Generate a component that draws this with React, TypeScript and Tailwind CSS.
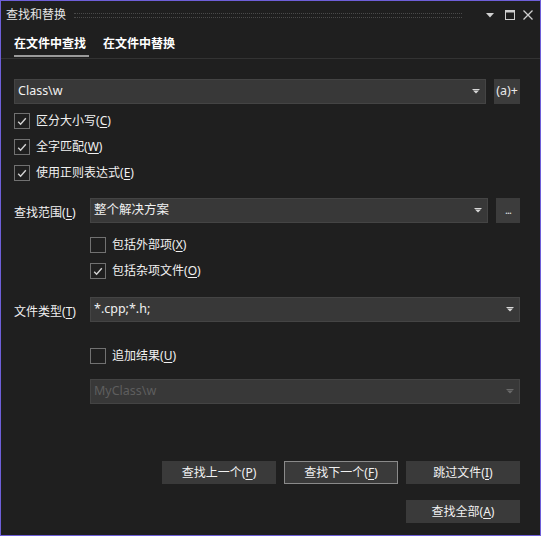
import React from 'react';

const FONT = { fontFamily: '"Segoe UI", "Noto Sans", "Noto Sans CJK SC", sans-serif' };

// mnemonic label: "区分大小写" + underlined key in parentheses
const Label: React.FC<{ text: string; k: string }> = ({ text, k }) => (
  <span className="text-[12px] text-[#f1f1f1] leading-none whitespace-nowrap">
    {text}(<u className="underline-offset-2">{k}</u>)
  </span>
);

const Arrow: React.FC<{ dim?: boolean }> = ({ dim }) => (
  <svg width="8" height="5" viewBox="0 0 8 5" className="shrink-0">
    <rect x="0.5" y="0" width="7" height="1" fill={dim ? '#6a6a6a' : '#d8d8d8'} />
    <path d="M1 1.5h6L4 4.5z" fill={dim ? '#6a6a6a' : '#d8d8d8'} />
  </svg>
);

const Combo: React.FC<{ value: string; disabled?: boolean; className?: string }> = ({ value, disabled, className }) => (
  <div
    className={`h-[25px] flex items-center justify-between pl-[3px] pr-[5px] border border-[#444] bg-[#383838] ${className ?? ''}`}
  >
    <span className={`text-[12.5px] leading-none ${disabled ? 'text-[#5e5e5e]' : 'text-[#f1f1f1]'}`}>{value}</span>
    <Arrow dim={disabled} />
  </div>
);

const Check: React.FC<{ checked?: boolean; text: string; k: string }> = ({ checked, text, k }) => (
  <div className="h-[26px] flex items-center gap-[6px]">
    <div className="w-[16px] h-[16px] border border-[#717171] flex items-center justify-center">
      {checked && (
        <svg width="10" height="9" viewBox="0 0 10 9">
          <path d="M1.2 4.8 3.6 7.2 8.8 1.3" stroke="#d4d4d4" strokeWidth="1.4" fill="none" />
        </svg>
      )}
    </div>
    <Label text={text} k={k} />
  </div>
);

const Button: React.FC<{ text: string; k: string; focused?: boolean }> = ({ text, k, focused }) => (
  <div
    className={`w-[114px] h-[23px] flex items-center justify-center bg-[#3a3a3a] ${focused ? 'border border-[#8a8a8a] bg-[#1f1f1f]' : ''}`}
  >
    <Label text={text} k={k} />
  </div>
);

export default function App() {
  return (
    <div style={FONT} className="w-[541px] h-[536px] bg-[#1f1f1f] border border-[#6e5fd8] flex flex-col">
      {/* title bar */}
      <div className="h-[28px] flex items-center pl-[5px] pr-[7px] shrink-0">
        <span className="text-[12px] text-[#e6e6e6] leading-none">查找和替换</span>
        <div className="flex-1 ml-[8px] mr-[24px] h-[5px] border-y border-dotted border-[#4a4a4a]" />
        <svg width="9" height="5" viewBox="0 0 9 5" className="mr-[10px]">
          <path d="M0 0h8L4 4.5z" fill="#d0d0d0" />
        </svg>
        <svg width="10" height="10" viewBox="0 0 10 10" className="mr-[8px]">
          <rect x="0.5" y="0.5" width="9" height="9" stroke="#d0d0d0" fill="none" />
          <rect x="0" y="0" width="10" height="2.5" fill="#d0d0d0" />
        </svg>
        <svg width="10" height="10" viewBox="0 0 10 10">
          <path d="M0.5 0.5l9 9M9.5 0.5l-9 9" stroke="#d0d0d0" strokeWidth="1.3" />
        </svg>
      </div>

      {/* tabs */}
      <div className="h-[30px] flex items-stretch gap-[17px] pl-[13px] border-b border-[#333] shrink-0">
        <div className="flex flex-col justify-center relative">
          <span className="text-[12px] font-bold text-white leading-none">在文件中查找</span>
          <div className="absolute left-0 right-[-3px] bottom-[1px] h-[2px] bg-[#9a9a9a]" />
        </div>
        <div className="flex flex-col justify-center">
          <span className="text-[12px] font-bold text-white leading-none">在文件中替换</span>
        </div>
      </div>

      <div className="flex flex-col pl-[13px] pr-[20px] flex-1">
        {/* find what */}
        <div className="mt-[20px] flex gap-[8px]">
          <Combo value="Class\w" className="flex-1" />
          <div className="w-[26px] h-[25px] bg-[#3c3c3c] flex items-center justify-center text-[12.5px] text-[#e8e8e8]">
            (a)+
          </div>
        </div>

        <div className="mt-[4px] flex flex-col">
          <Check checked text="区分大小写" k="C" />
          <Check checked text="全字匹配" k="W" />
          <Check checked text="使用正则表达式" k="E" />
        </div>

        {/* look in */}
        <div className="mt-[12px] flex items-center">
          <div className="w-[76px]">
            <Label text="查找范围" k="L" />
          </div>
          <Combo value="整个解决方案" className="flex-1" />
          <div className="ml-[8px] w-[24px] h-[25px] bg-[#3c3c3c] flex items-end justify-center pb-[8px]">
            <span className="text-[11px] text-[#e0e0e0] leading-none tracking-[-1px]">...</span>
          </div>
        </div>

        <div className="mt-[9px] ml-[76px] flex flex-col">
          <Check text="包括外部项" k="X" />
          <Check checked text="包括杂项文件" k="O" />
        </div>

        {/* file types */}
        <div className="mt-[13px] flex items-center">
          <div className="w-[76px]">
            <Label text="文件类型" k="T" />
          </div>
          <Combo value="*.cpp;*.h;" className="flex-1" />
        </div>

        <div className="mt-[21px] ml-[76px]">
          <Check text="追加结果" k="U" />
        </div>
        <div className="mt-[10px] ml-[76px]">
          <Combo value="MyClass\w" disabled />
        </div>

        {/* actions */}
        <div className="mt-auto mb-[12px] flex flex-col items-end gap-[16px]">
          <div className="flex gap-[8px]">
            <Button text="查找上一个" k="P" />
            <Button text="查找下一个" k="F" focused />
            <Button text="跳过文件" k="I" />
          </div>
          <Button text="查找全部" k="A" />
        </div>
      </div>
    </div>
  );
}
